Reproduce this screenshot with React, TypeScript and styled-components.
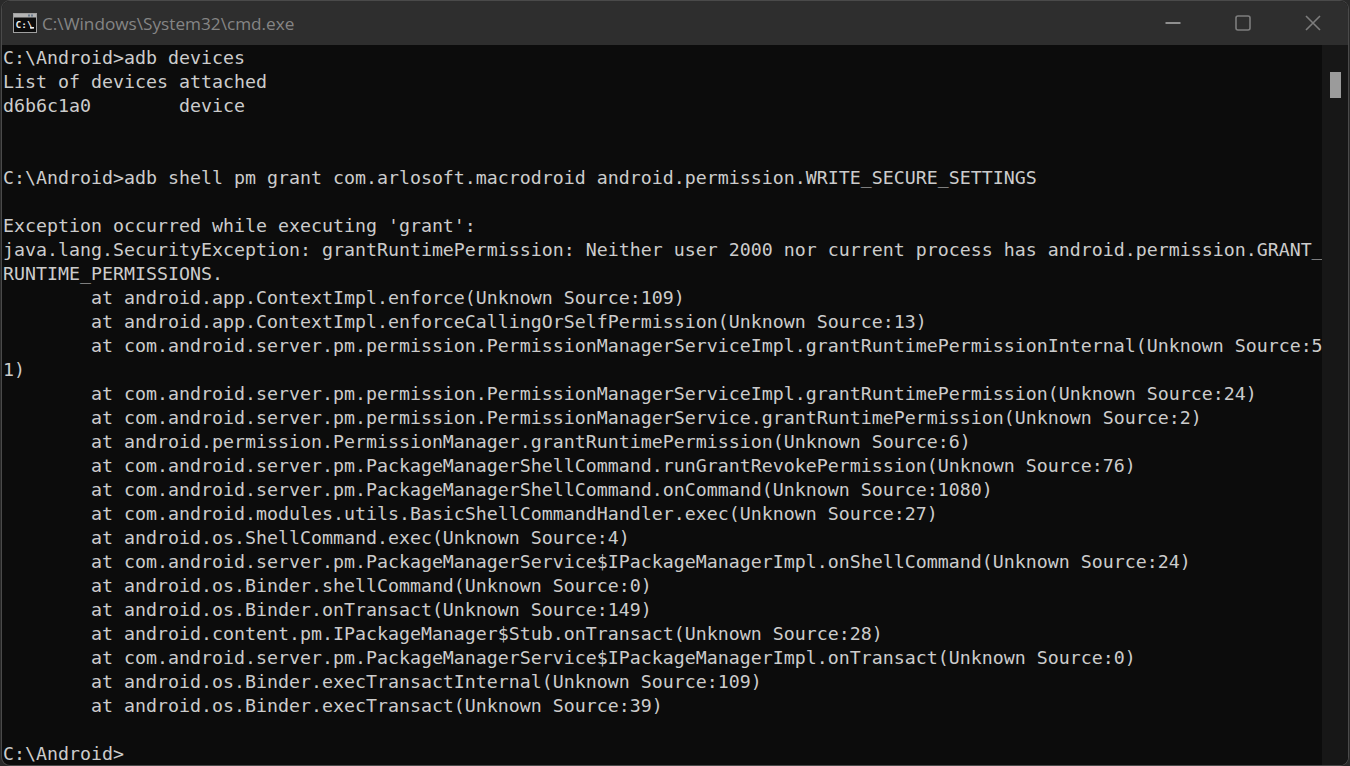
import React from 'react'
import styled, { createGlobalStyle } from 'styled-components'

const GlobalStyle = createGlobalStyle`
  html, body {
    margin: 0;
    height: 100%;
    background: #2a2a2a;
    overflow: hidden;
  }
`

const Desktop = styled.div`
  width: 1350px;
  height: 766px;
  padding: 1px 2px;
  box-sizing: border-box;
  display: flex;
`

const Window = styled.div`
  flex: 1;
  display: flex;
  flex-direction: column;
  overflow: hidden;
  border-radius: 8px;
  background: #0c0c0c;
  box-shadow: 0 0 0 1px #4a4a4a;
`

const TitleBar = styled.header`
  height: 44px;
  flex: none;
  display: flex;
  align-items: center;
  background: #2e2e2e;
  padding-left: 11px;
`

const AppIcon = styled.svg`
  width: 24px;
  height: 20px;
  flex: none;
`

const IconGlyph = styled.text`
  font-family: "DejaVu Sans Mono", monospace;
  font-size: 9.5px;
  font-weight: 700;
  fill: #f0f0f0;
`

const Title = styled.span`
  margin-left: 5px;
  font: 17.2px "Open Sans", "Noto Sans", sans-serif;
  color: #858585;
`

const Controls = styled.div`
  margin-left: auto;
  display: flex;
`

const ControlButton = styled.div`
  width: 70px;
  height: 44px;
  display: flex;
  align-items: center;
  justify-content: center;
`

const ControlIcon = styled.svg<{ $bright?: boolean }>`
  width: 16px;
  height: 16px;
  fill: none;
  stroke: ${(p) => (p.$bright ? '#b0b0b0' : '#7d7d7d')};
  stroke-width: 1.6;
`

const Body = styled.div`
  flex: 1;
  display: flex;
  min-height: 0;
`

const Console = styled.pre`
  flex: 1;
  margin: 0;
  padding: 1px 0 0 1px;
  overflow: hidden;
  font-family: "DejaVu Sans Mono", monospace;
  font-size: 18.27px;
  line-height: 24px;
  color: #cccccc;
`

const ScrollTrack = styled.div`
  width: 26px;
  flex: none;
  background: #171717;
  padding-top: 27px;
  display: flex;
  justify-content: center;
`

const ScrollThumb = styled.div`
  width: 11px;
  height: 26px;
  background: #9b9b9b;
`

const output = `C:\\Android>adb devices
List of devices attached
d6b6c1a0        device


C:\\Android>adb shell pm grant com.arlosoft.macrodroid android.permission.WRITE_SECURE_SETTINGS

Exception occurred while executing 'grant':
java.lang.SecurityException: grantRuntimePermission: Neither user 2000 nor current process has android.permission.GRANT_
RUNTIME_PERMISSIONS.
        at android.app.ContextImpl.enforce(Unknown Source:109)
        at android.app.ContextImpl.enforceCallingOrSelfPermission(Unknown Source:13)
        at com.android.server.pm.permission.PermissionManagerServiceImpl.grantRuntimePermissionInternal(Unknown Source:5
1)
        at com.android.server.pm.permission.PermissionManagerServiceImpl.grantRuntimePermission(Unknown Source:24)
        at com.android.server.pm.permission.PermissionManagerService.grantRuntimePermission(Unknown Source:2)
        at android.permission.PermissionManager.grantRuntimePermission(Unknown Source:6)
        at com.android.server.pm.PackageManagerShellCommand.runGrantRevokePermission(Unknown Source:76)
        at com.android.server.pm.PackageManagerShellCommand.onCommand(Unknown Source:1080)
        at com.android.modules.utils.BasicShellCommandHandler.exec(Unknown Source:27)
        at android.os.ShellCommand.exec(Unknown Source:4)
        at com.android.server.pm.PackageManagerService$IPackageManagerImpl.onShellCommand(Unknown Source:24)
        at android.os.Binder.shellCommand(Unknown Source:0)
        at android.os.Binder.onTransact(Unknown Source:149)
        at android.content.pm.IPackageManager$Stub.onTransact(Unknown Source:28)
        at com.android.server.pm.PackageManagerService$IPackageManagerImpl.onTransact(Unknown Source:0)
        at android.os.Binder.execTransactInternal(Unknown Source:109)
        at android.os.Binder.execTransact(Unknown Source:39)

C:\\Android>`

export default function App() {
  return (
    <Desktop>
      <GlobalStyle />
      <Window>
        <TitleBar>
          <AppIcon viewBox="0 0 24 20">
            <rect x="0.5" y="0.5" width="23" height="19" fill="#0c0c0c" stroke="#a0a0a0" />
            <rect x="1" y="1" width="22" height="3.5" fill="#b4b4b4" />
            <rect x="15" y="1.5" width="2" height="2" fill="#6a7a8c" />
            <rect x="18" y="1.5" width="2" height="2" fill="#6a7a8c" />
            <IconGlyph x="2.5" y="15">C:\</IconGlyph>
            <rect x="17" y="14" width="4" height="1.6" fill="#f0f0f0" />
          </AppIcon>
          <Title>C:\Windows\System32\cmd.exe</Title>
          <Controls>
            <ControlButton>
              <ControlIcon viewBox="0 0 16 16" $bright>
                <path d="M0.5 8h15" />
              </ControlIcon>
            </ControlButton>
            <ControlButton>
              <ControlIcon viewBox="0 0 16 16">
                <rect x="1" y="1" width="14" height="14" rx="2" />
              </ControlIcon>
            </ControlButton>
            <ControlButton>
              <ControlIcon viewBox="0 0 16 16">
                <path d="M1 1l14 14M15 1L1 15" />
              </ControlIcon>
            </ControlButton>
          </Controls>
        </TitleBar>
        <Body>
          <Console>{output}</Console>
          <ScrollTrack>
            <ScrollThumb />
          </ScrollTrack>
        </Body>
      </Window>
    </Desktop>
  )
}
